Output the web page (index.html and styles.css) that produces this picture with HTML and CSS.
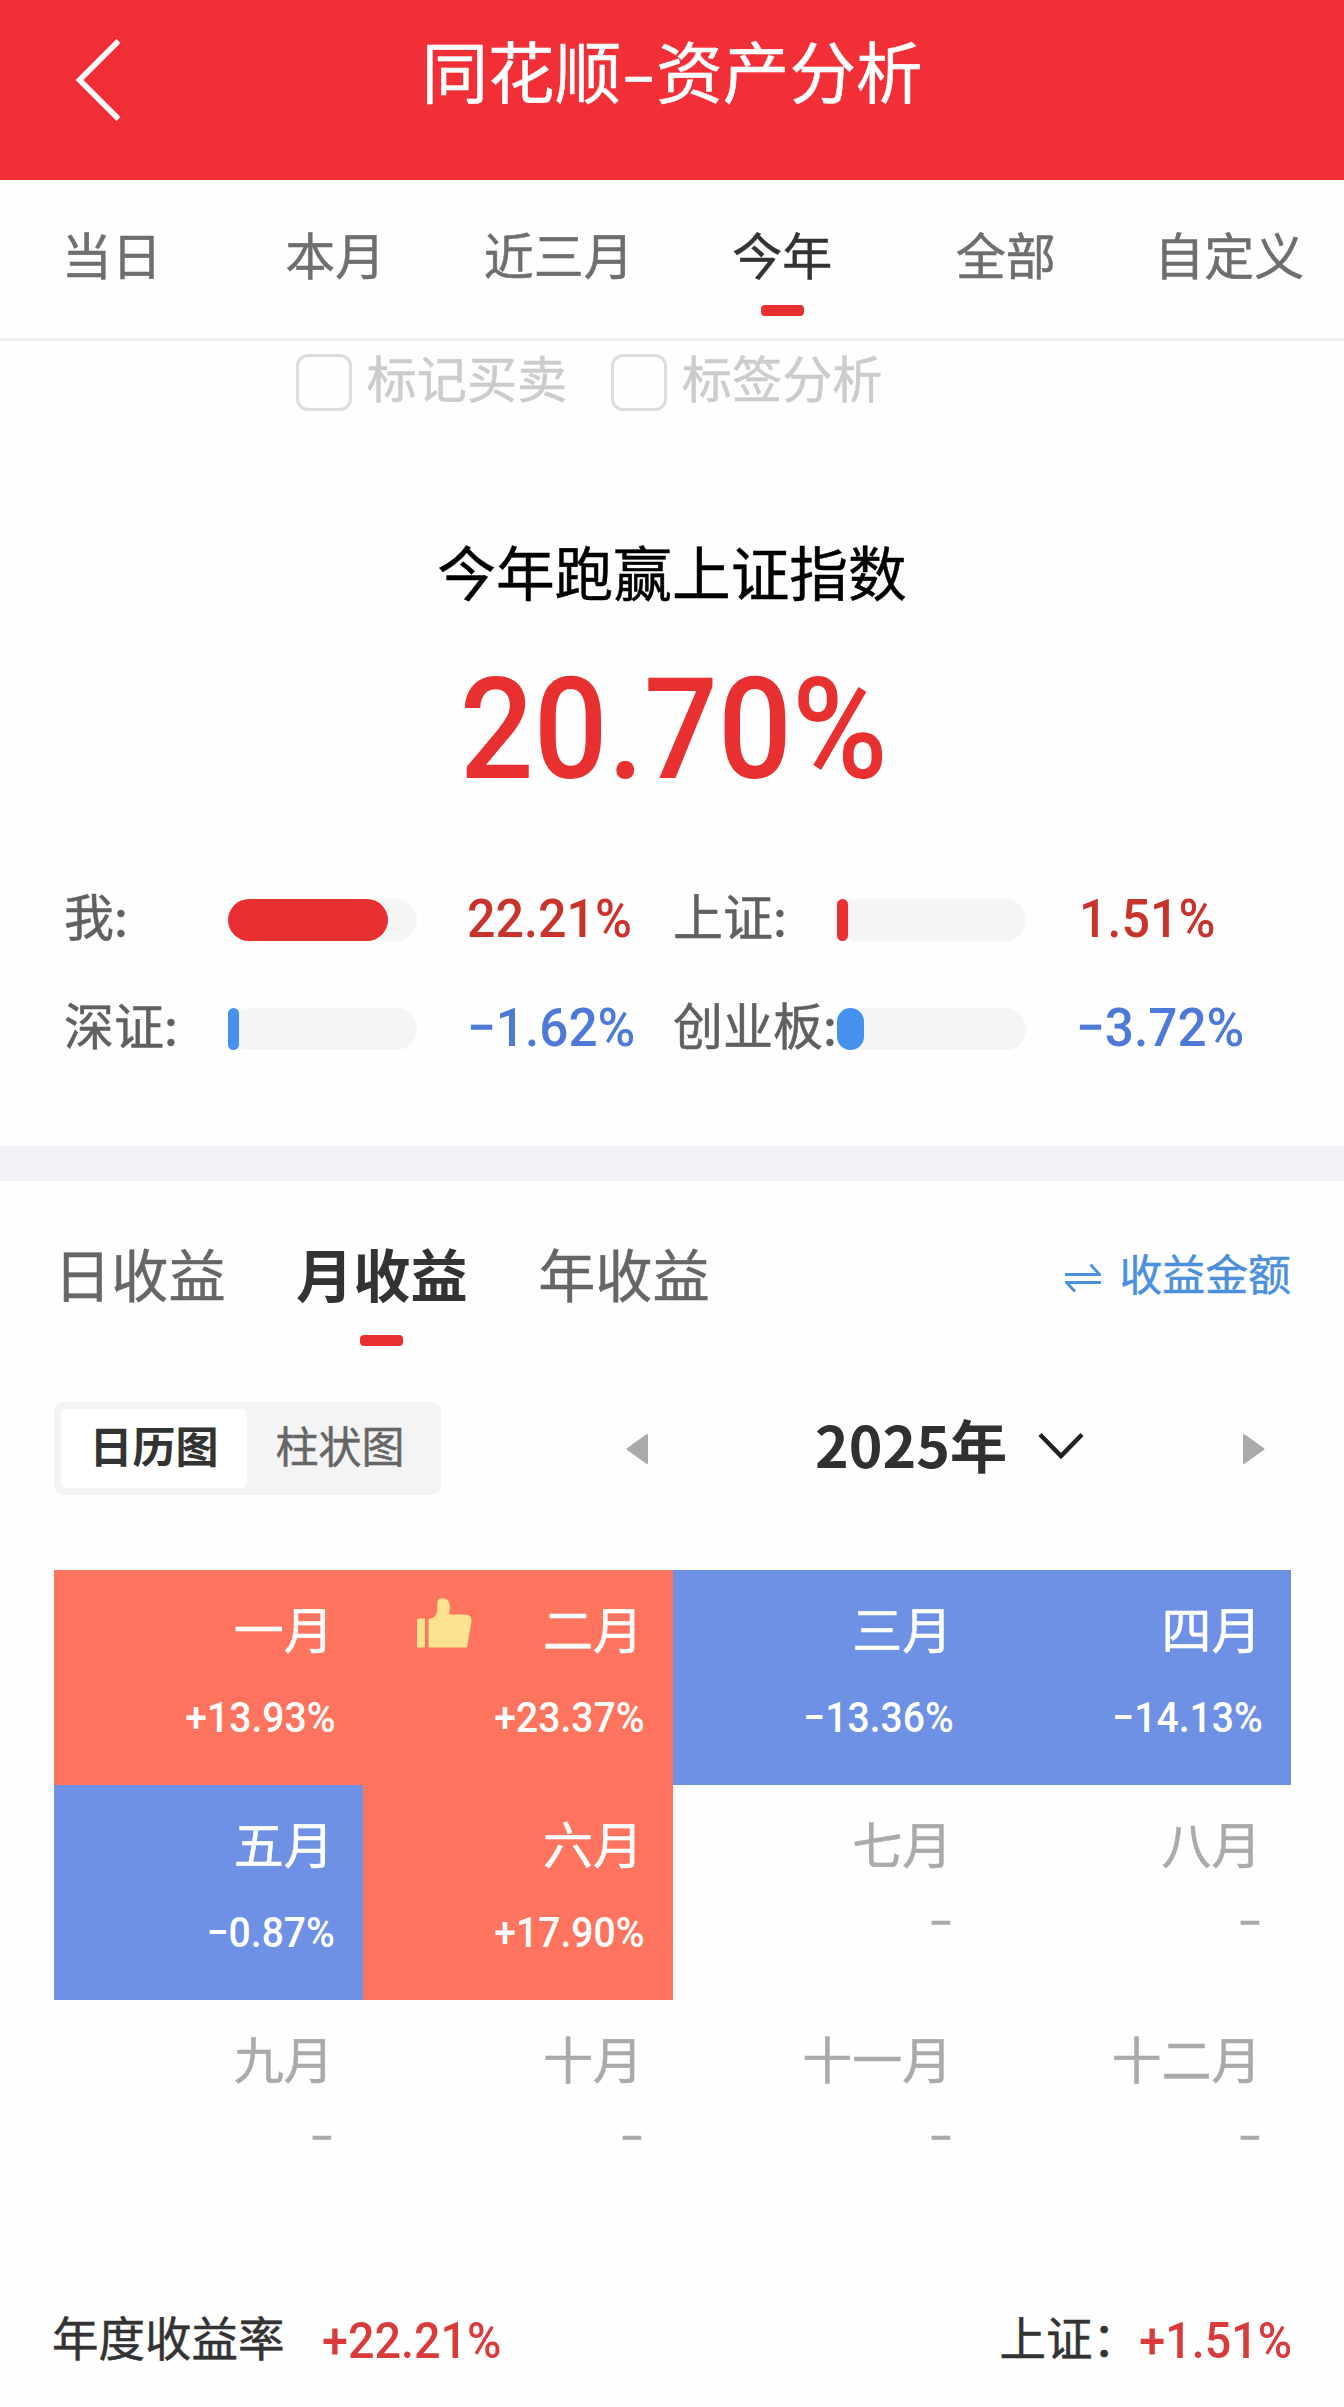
FILE: index.html
```html
<!DOCTYPE html>
<html lang="zh-CN">
<head>
<meta charset="utf-8">
<title>同花顺-资产分析</title>
<link rel="stylesheet" href="styles.css">
</head>
<body>
<header class="topbar">
  <svg class="back" viewBox="0 0 50 86" fill="none" stroke="#fff" stroke-width="5.5"><path d="M45.500 4 6.500 43 45.500 82"/></svg>
  <h1 class="title">同花顺<span class="title-dash">-</span>资产分析</h1>
</header>

<nav class="periods">
  <a class="period">当日</a>
  <a class="period">本月</a>
  <a class="period">近三月</a>
  <a class="period active">今年</a>
  <a class="period">全部</a>
  <a class="period">自定义</a>
</nav>

<div class="marks">
  <label class="mark"><span class="box"></span>标记买卖</label>
  <label class="mark"><span class="box"></span>标签分析</label>
</div>

<section class="summary">
  <h2 class="summary-title">今年跑赢上证指数</h2>
  <div class="summary-value"><span class="num">20.70%</span></div>
  <div class="compare">
    <div class="item"><span class="label">我:</span><span class="track"><span class="fill up" style="width:160px"></span></span><span class="num rate-up">22.21%</span></div>
    <div class="item"><span class="label">上证:</span><span class="track"><span class="fill up" style="width:11px"></span></span><span class="num rate-up">1.51%</span></div>
    <div class="item"><span class="label">深证:</span><span class="track"><span class="fill down" style="width:11px"></span></span><span class="num rate-down">−1.62%</span></div>
    <div class="item"><span class="label">创业板:</span><span class="track"><span class="fill down" style="width:27px"></span></span><span class="num rate-down">−3.72%</span></div>
  </div>
</section>

<section class="income">
  <div class="income-head">
    <nav class="income-tabs">
      <a class="income-tab">日收益</a>
      <a class="income-tab active">月收益</a>
      <a class="income-tab">年收益</a>
    </nav>
    <a class="switch">
      <svg class="switch-icon" viewBox="0 0 36 30" fill="none" stroke="#4b90dc" stroke-width="2.800"><path d="M0 11.500H34.500L25.500 1.500M36 19.500H1.500L10 28.500"/></svg>
      收益金额
    </a>
  </div>

  <div class="tools">
    <div class="segment">
      <span class="seg active">日历图</span>
      <span class="seg">柱状图</span>
    </div>
    <svg class="prev" viewBox="0 0 24 32"><path d="M2.500 16 22 2V30Z" fill="#aaa" stroke="#aaa" stroke-width="2" stroke-linejoin="round"/></svg>
    <span class="year">2025年</span>
    <svg class="caret" viewBox="0 0 46 28" fill="none" stroke="#222" stroke-width="4.500"><path d="M2 2.500 23 24 44 2.500"/></svg>
    <svg class="next" viewBox="0 0 24 32"><path d="M21.500 16 2 2V30Z" fill="#aaa" stroke="#aaa" stroke-width="2" stroke-linejoin="round"/></svg>
  </div>

  <div class="calendar">
    <div class="cell gain"><div class="month">一月</div><div class="num value">+13.93%</div></div>
    <div class="cell gain"><div class="month best"><svg class="thumb" viewBox="0 0 55 50" fill="#fde38f"><path d="M0 22.500Q0 20.500 2 20.500H8V49.500H0Z"/><path d="M11.500 49.500V21C17 20.500 20 17 20.300 12V5C20.500 1.500 23 .3 26 .3 30.500.3 33 4 33 9.500L32 16.500H49Q54.500 17 54.500 23L50 49.500Z"/></svg>二月</div><div class="num value">+23.37%</div></div>
    <div class="cell loss"><div class="month">三月</div><div class="num value">−13.36%</div></div>
    <div class="cell loss"><div class="month">四月</div><div class="num value">−14.13%</div></div>
    <div class="cell loss"><div class="month">五月</div><div class="num value">−0.87%</div></div>
    <div class="cell gain"><div class="month">六月</div><div class="num value">+17.90%</div></div>
    <div class="cell"><div class="month">七月</div><div class="none">-</div></div>
    <div class="cell"><div class="month">八月</div><div class="none">-</div></div>
    <div class="cell"><div class="month">九月</div><div class="none">-</div></div>
    <div class="cell"><div class="month">十月</div><div class="none">-</div></div>
    <div class="cell"><div class="month">十一月</div><div class="none">-</div></div>
    <div class="cell"><div class="month">十二月</div><div class="none">-</div></div>
  </div>

  <footer class="totals">
    <div class="total">年度收益率<span class="num total-rate">+22.21%</span></div>
    <div class="total index">上证：<span class="num total-rate">+1.51%</span></div>
  </footer>
</section>
</body>
</html>
```
FILE: styles.css
```css
* { box-sizing: border-box; }
body {
  margin: 0;
  width: 1344px;
  height: 2407px;
  overflow: hidden;
  background: #fefefe;
  color: #333;
  font-family: "Noto Sans CJK SC", sans-serif;
  -webkit-text-stroke: .5px;
}
svg { display: block; flex: none; }
h1, h2 { margin: 0; font-weight: 400; }
.num {
  display: inline-block;
  font-family: Roboto, "Noto Sans CJK SC", sans-serif;
  font-weight: 500;
  transform: scaleX(.93);
  transform-origin: left;
  white-space: nowrap;
  -webkit-text-stroke: 0;
}

.topbar {
  display: flex;
  align-items: flex-start;
  height: 180px;
  padding: 37px 0 0 73px;
  background: #f22f37;
}
.back { width: 50px; height: 86px; }
.title {
  margin-left: 298.500px;
  margin-top: -13px;
  color: #fff;
  font-size: 66.600px;
  line-height: 90px;
  white-space: nowrap;
}
.title-dash {
  display: inline-block;
  width: 35px;
  text-align: center;
  transform: scaleX(1.500);
}

.periods {
  display: grid;
  grid-template-columns: repeat(6, 223.500px);
  height: 161px;
  border-bottom: 3px solid #f0f0f0;
}
.period {
  display: flex;
  flex-direction: column;
  align-items: center;
  padding-top: 43px;
  font-size: 50px;
  line-height: 60px;
  color: #6e6e6e;
}
.period.active { color: #333; }
.period.active::after,
.income-tab.active::after {
  content: "";
  width: 43px;
  height: 11px;
  border-radius: 4px;
  background: #e93030;
}
.period.active::after { margin-top: 22px; }

.marks {
  display: flex;
  gap: 44px;
  padding: 13px 0 0 296px;
}
.mark {
  display: flex;
  align-items: flex-start;
  gap: 14.500px;
  color: #ccc;
  font-size: 50.200px;
  line-height: 45px;
}
.box {
  width: 56px;
  height: 57px;
  border: 3px solid #ddd;
  border-radius: 12px;
}

.summary {
  height: 770px;
  padding-top: 120px;
  border-bottom: 35px solid #f2f3f7;
}
.summary-title {
  color: #000;
  font-size: 58.700px;
  line-height: 80px;
  text-align: center;
}
.summary-value {
  margin-top: 36px;
  height: 140px;
  padding-left: 4px;
  color: #e93030;
  font-size: 141px;
  line-height: 140px;
  text-align: center;
}
.summary-value .num { transform: scaleX(.923); transform-origin: center; }
.compare {
  display: grid;
  grid-template-columns: 609px 640px;
  grid-auto-rows: 60px;
  row-gap: 49px;
  margin-top: 103px;
  padding-left: 64px;
}
.item { display: flex; align-items: center; }
.label {
  width: 164px;
  color: #606060;
  font-size: 50px;
  line-height: 60px;
  margin-top: -12px;
  white-space: nowrap;
}
.track {
  width: 189px;
  height: 42px;
  border-radius: 21px;
  background: #f4f6f6;
}
.fill { display: block; height: 42px; border-radius: 21px; }
.fill.up { background: #e93030; }
.fill.down { background: #4691ee; }
.item .num { margin: -2px 0 0 50px; font-size: 54px; line-height: 60px; }
.item:nth-child(2) .num { margin-left: 52.500px; }
.rate-up { color: #c8332c; }
.item .rate-down { color: #4d7ad8; transform: scaleX(.95); }

.income-head {
  display: flex;
  justify-content: space-between;
  padding: 51px 53px 0 54px;
}
.income-tabs { display: flex; gap: 70.500px; }
.income-tab {
  display: flex;
  flex-direction: column;
  align-items: center;
  color: #666;
  font-size: 57.200px;
  line-height: 80px;
}
.income-tab.active { color: #333; font-weight: 700; }
.income-tab.active::after { margin-top: 23px; }
.switch {
  display: flex;
  align-items: center;
  gap: 18px;
  height: 81px;
  color: #4b90dc;
  font-size: 42.900px;
  line-height: 81px;
}
.switch-icon { width: 36px; height: 30px; margin-top: 10px; }

.tools {
  display: flex;
  align-items: center;
  height: 93px;
  margin-top: 56px;
  padding-left: 54px;
}
.segment {
  display: flex;
  width: 387px;
  height: 93px;
  padding: 7px;
  border-radius: 9px;
  background: #f4f4f4;
}
.seg {
  width: 186px;
  height: 79px;
  border-radius: 5px;
  color: #666;
  font-size: 43px;
  line-height: 71px;
  text-align: center;
}
.seg.active { background: #fff; color: #333; font-weight: 700; }
.prev { width: 24px; height: 32px; margin-left: 184px; }
.year {
  width: 194px;
  margin: -12px 0 0 166px;
  color: #303030;
  font-size: 57.200px;
  font-weight: 700;
  line-height: 80px;
  white-space: nowrap;
}
.income-tab.active, .seg.active, .year { -webkit-text-stroke: 0; }
.caret { width: 46px; height: 28px; margin: -6px 0 0 29px; }
.next { width: 24px; height: 32px; margin-left: 157.500px; }

.calendar {
  display: grid;
  grid-template-columns: repeat(4, 1fr);
  grid-auto-rows: 215px;
  width: 1237px;
  margin: 75px 0 0 54px;
}
.cell {
  display: flex;
  flex-direction: column;
  align-items: flex-end;
  padding: 28px 28px 0 54px;
  color: #aaa;
}
.gain { background: #ff745e; color: #fff; }
.loss { background: #6e91e5; color: #fff; }
.month { padding-right: 1.500px; font-size: 50px; line-height: 59px; }
.best { display: flex; justify-content: space-between; width: 100%; }
.thumb { width: 55px; height: 50px; }
.value {
  margin-top: 31px;
  font-size: 42px;
  line-height: 60px;
  transform-origin: right;
}
.none {
  width: 26px;
  margin-top: 13px;
  font-size: 50px;
  line-height: 60px;
  text-align: center;
  transform: scaleX(1.400);
}

.totals {
  display: flex;
  justify-content: space-between;
  margin-top: 91px;
  padding: 0 52px;
}
.total {
  display: flex;
  align-items: center;
  height: 60px;
  font-size: 46.500px;
  line-height: 60px;
}
.total-rate {
  margin: 10px 0 0 37px;
  color: #d93a3a;
  font-size: 49.500px;
  transform: scaleX(.943);
}
.index .total-rate { margin-left: -9px; transform-origin: right; }
```
